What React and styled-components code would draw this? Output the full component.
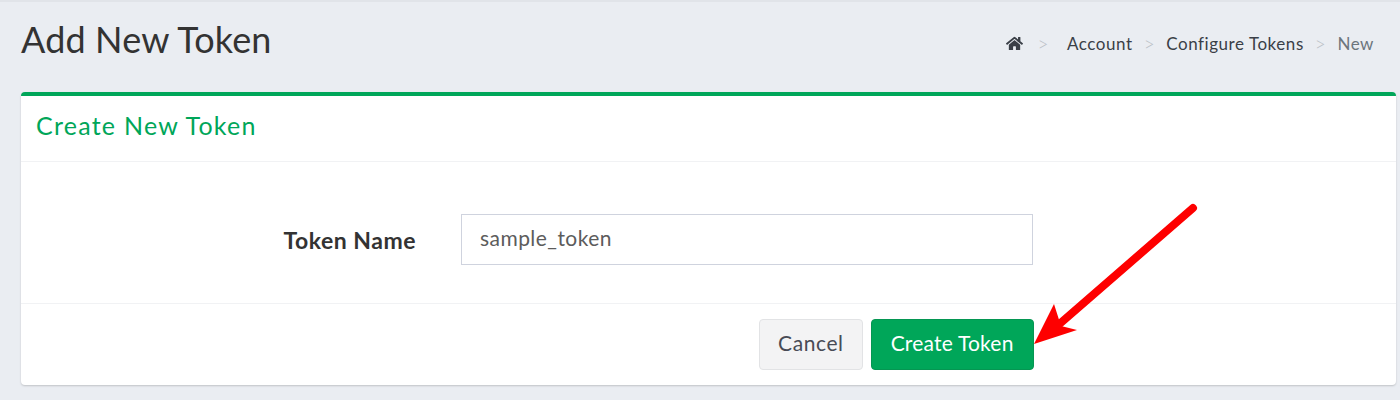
import styled, { createGlobalStyle } from "styled-components";
import { FaHome } from "react-icons/fa";

const GlobalStyle = createGlobalStyle`
  html, body {
    margin: 0;
    padding: 0;
    background: #eaedf2;
    font-family: Lato, "Open Sans", sans-serif;
  }
`;

const App = () => {
  return (
    <Page>
      <GlobalStyle />
      <TopShadow />
      <PageHead>
        <PageTitle>Add New Token</PageTitle>
        <Breadcrumb>
          <Crumb>
            <FaHome size={17} />
          </Crumb>
          <Sep $wide>&gt;</Sep>
          <Crumb>Account</Crumb>
          <Sep>&gt;</Sep>
          <Crumb>Configure Tokens</Crumb>
          <Sep>&gt;</Sep>
          <Crumb $muted>New</Crumb>
        </Breadcrumb>
      </PageHead>
      <Card>
        <CardHeader>
          <CardTitle>Create New Token</CardTitle>
        </CardHeader>
        <CardBody>
          <FieldLabel>Token Name</FieldLabel>
          <TextInput readOnly value="sample_token" />
        </CardBody>
        <CardFooter>
          <Button>Cancel</Button>
          <Button $primary>Create Token</Button>
        </CardFooter>
      </Card>
      <Arrow viewBox="0 0 1400 400" width="1400" height="400">
        <line x1="1193" y1="208" x2="1056" y2="327" stroke="#fe0000" strokeWidth="8" strokeLinecap="round" />
        <polygon points="1034,344 1054,304 1061,326 1077,330" fill="#fe0000" />
      </Arrow>
    </Page>
  );
};

const Page = styled.div`
  position: relative;
  width: 1400px;
  height: 400px;
  overflow: hidden;
  padding: 0 4px 0 21px;
  box-sizing: border-box;
`;
const TopShadow = styled.div`
  position: absolute;
  top: 0;
  left: 0;
  right: 0;
  height: 2px;
  background: #e1e4e9;
`;
const PageHead = styled.div`
  display: flex;
  justify-content: space-between;
  height: 92px;
`;
const PageTitle = styled.h1`
  margin: 0;
  padding-top: 18px;
  font-size: 36px;
  line-height: 42px;
  font-weight: 400;
  letter-spacing: 0.15px;
  color: #333333;
`;
const Breadcrumb = styled.div`
  display: flex;
  align-items: center;
  height: 24px;
  margin-top: 31px;
  padding-right: 22px;
  font-size: 17px;
  letter-spacing: 0.55px;
`;
const Crumb = styled.span`
  display: flex;
  align-items: center;
  color: ${(props) => (props.$muted ? "#6c757d" : "#3a3f47")};
`;
const Sep = styled.span`
  color: #b9bec5;
  font-size: 19px;
  font-weight: 300;
  margin: ${(props) => (props.$wide ? "0 18px 0 14px" : "0 11px")};
`;
const Card = styled.div`
  height: 293px;
  box-sizing: border-box;
  border-top: 4px solid #00a659;
  border-radius: 4px;
  background: #ffffff;
  box-shadow: 0 1px 2px rgba(0, 0, 0, 0.18);
  display: flex;
  flex-direction: column;
`;
const CardHeader = styled.div`
  height: 66px;
  box-sizing: border-box;
  padding: 0 15px 8px;
  display: flex;
  align-items: center;
  border-bottom: 1px solid #f1f2f4;
`;
const CardTitle = styled.h3`
  margin: 0;
  font-size: 25px;
  font-weight: 400;
  letter-spacing: 1.25px;
  color: #00a659;
`;
const CardBody = styled.div`
  height: 142px;
  box-sizing: border-box;
  padding-top: 14px;
  display: flex;
  align-items: center;
  border-bottom: 1px solid #f1f2f4;
`;
const FieldLabel = styled.label`
  width: 395px;
  box-sizing: border-box;
  text-align: right;
  font-size: 23px;
  font-weight: 700;
  letter-spacing: 0.5px;
  color: #333333;
`;
const TextInput = styled.input`
  margin-left: 45px;
  width: 572px;
  height: 51px;
  box-sizing: border-box;
  padding: 0 18px 4px;
  border: 1px solid #cfd3de;
  outline: none;
  font-family: inherit;
  font-size: 21px;
  letter-spacing: 0.45px;
  color: #5c5c5c;
`;
const CardFooter = styled.div`
  flex: 1;
  display: flex;
  align-items: flex-start;
  gap: 8px;
  padding: 15px 0 0 738px;
`;
const Button = styled.button`
  height: 51px;
  box-sizing: border-box;
  padding: 0 ${(props) => (props.$primary ? "19px" : "18px")} 4px;
  border-radius: 4px;
  border: 1px solid ${(props) => (props.$primary ? "#059652" : "#e2e3e5")};
  background: ${(props) => (props.$primary ? "#00a659" : "#f3f3f4")};
  color: ${(props) => (props.$primary ? "#ffffff" : "#484b55")};
  font-family: inherit;
  font-size: 21px;
  letter-spacing: ${(props) => (props.$primary ? "0.2px" : "0.6px")};
`;
const Arrow = styled.svg`
  position: absolute;
  top: 0;
  left: 0;
  pointer-events: none;
`;

export default App;
